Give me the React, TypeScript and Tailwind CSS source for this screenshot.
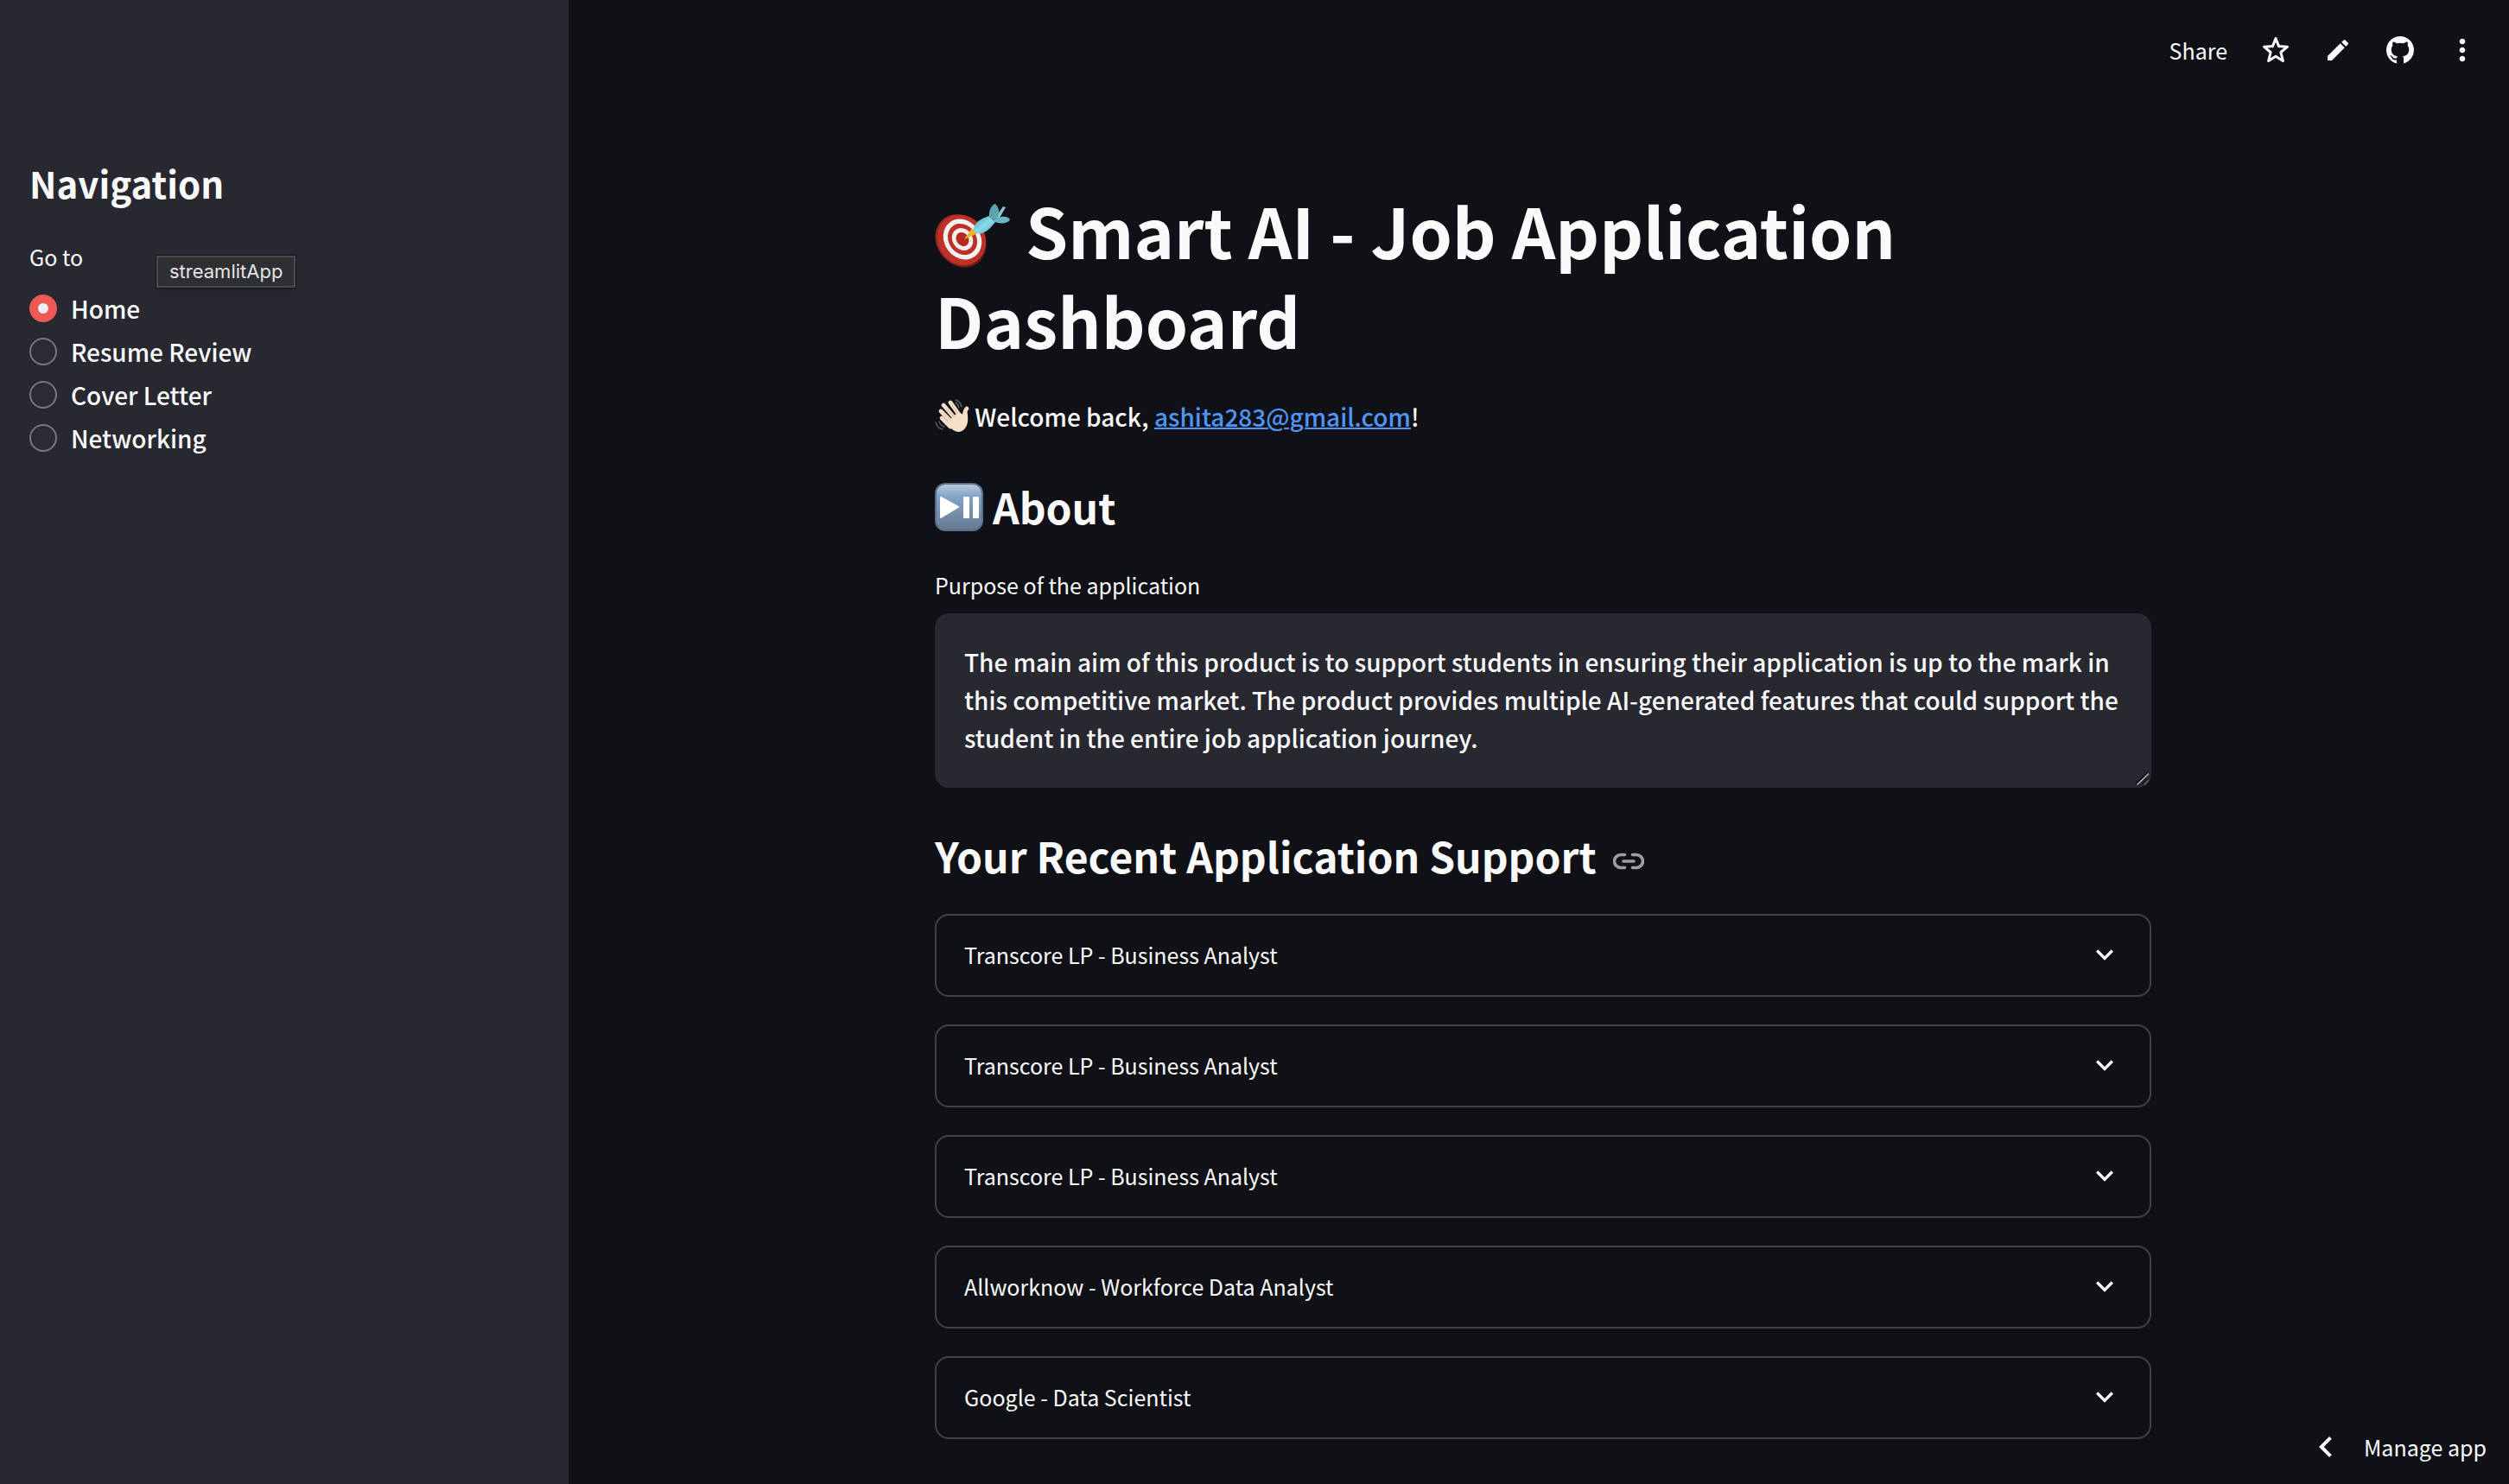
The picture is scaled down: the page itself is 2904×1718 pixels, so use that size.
import { MdChevronLeft, MdEdit, MdExpandMore, MdMoreVert } from "react-icons/md";

const pages = ["Home", "Resume Review", "Cover Letter", "Networking"];

const applications = [
  "Transcore LP - Business Analyst",
  "Transcore LP - Business Analyst",
  "Transcore LP - Business Analyst",
  "Allworknow - Workforce Data Analyst",
  "Google - Data Scientist",
];

const purpose =
  "The main aim of this product is to support students in ensuring their application is up to the mark in this competitive market. The product provides multiple AI-generated features that could support the student in the entire job application journey.";

function TargetIcon() {
  return (
    <svg viewBox="1 0 87 76" className="inline-block h-[76px] w-[87px] align-[-11px]" role="img" aria-label="Direct hit">
      <defs>
        <linearGradient id="dart" x1="0" y1="0" x2="1" y2="1">
          <stop offset="0" stopColor="#4f9fac" />
          <stop offset="0.5" stopColor="#84dbe6" />
          <stop offset="1" stopColor="#5fb4c0" />
        </linearGradient>
      </defs>
      <ellipse cx="32" cy="45" rx="27" ry="31" fill="#6b1a16" transform="rotate(-35 32 45)" />
      <ellipse cx="30" cy="43" rx="27" ry="31" fill="#9c2822" transform="rotate(-35 30 43)" />
      <g transform="rotate(-35 33 42)">
        <ellipse cx="32" cy="42" rx="27" ry="30" fill="#be3028" />
        <ellipse cx="33" cy="42" rx="21" ry="24.5" fill="#f3f1ef" />
        <ellipse cx="33" cy="42" rx="16" ry="19" fill="#bd2f27" />
        <ellipse cx="33" cy="42" rx="11.5" ry="13.5" fill="#f3f1ef" />
        <ellipse cx="33" cy="42" rx="7" ry="8.5" fill="#b52a23" />
      </g>
      <path d="M35 42 44 29 51 35Z" fill="#e3b62f" />
      <path d="M46 31C46 22 55 18 64 15L71 22C64 31 57 37 49 35Z" fill="url(#dart)" />
      <path d="M69 20 80 4 83 5 76 17Z" fill="#86c7d0" />
      <path d="M64 17C63 8 67 2 71 1C76 6 77 13 71 20Z" fill="#5aa5b0" />
      <path d="M68 21C75 15 84 14 88 19C86 24 76 25 68 21Z" fill="#68b6c1" />
    </svg>
  );
}

function WaveIcon() {
  return (
    <svg viewBox="0 0 40 40" className="inline-block h-10 w-10 align-[-8px]" role="img" aria-label="Waving hand">
      <g stroke="#f6dfc9" strokeLinecap="round" fill="none">
        <path d="M8 22 18 32" strokeWidth="4.6" />
        <path d="M7 14 20 27" strokeWidth="4.8" />
        <path d="M10 7 23 22" strokeWidth="4.8" />
        <path d="M18 4 28 18" strokeWidth="4.8" />
        <path d="M37 11C33 15 35 21 33 25" strokeWidth="4.6" />
      </g>
      <path d="M14 27 27 15 33 18 37 12C39 22 39 30 34 35C29 40 22 38 18 33Z" fill="#f6dfc9" />
      <path d="M10 16 19 25M13 11 23 21M20 7 27 17" stroke="#d9b497" strokeWidth="1" fill="none" />
      <g stroke="#5b5c60" strokeWidth="1.4" strokeLinecap="round" fill="none">
        <path d="M1 27C2 31 5 34 9 35M5 26C6 29 8 31 11 32M24 1C28 2 30 5 31 9M24 4C26 5 27 7 28 10" />
      </g>
    </svg>
  );
}

function PlayPauseIcon() {
  return (
    <svg viewBox="0 0 56 56" className="inline-block h-14 w-14 align-[-8px]" role="img" aria-label="Play or pause">
      <defs>
        <linearGradient id="key" x1="0" y1="0" x2="0" y2="1">
          <stop offset="0" stopColor="#bccbdc" />
          <stop offset="0.28" stopColor="#84a2c4" />
          <stop offset="1" stopColor="#65798f" />
        </linearGradient>
      </defs>
      <rect x="1" y="1" width="54" height="54" rx="11" fill="url(#key)" stroke="#56718d" strokeWidth="2" />
      <path d="M7 17 27 28 7 40Z" fill="#fff" stroke="#fff" strokeWidth="2" strokeLinejoin="round" />
      <rect x="33" y="16" width="7" height="25" rx="1" fill="#fff" />
      <rect x="44" y="16" width="7" height="25" rx="1" fill="#fff" />
    </svg>
  );
}

function StarIcon() {
  return (
    <svg viewBox="0 0 32 32" className="size-8" fill="none" stroke="currentColor" strokeWidth="3" strokeLinejoin="round" aria-hidden="true">
      <path d="M16 2.5 19.6 11.6 29.5 12.2 21.9 18.5 24.4 28.5 16 23.2 7.6 28.5 10.1 18.5 2.5 12.2 12.4 11.6Z" />
    </svg>
  );
}

function GithubIcon() {
  return (
    <svg viewBox="0 0 16 16" className="size-8" fill="currentColor" aria-hidden="true">
      <path d="M8 0C3.58 0 0 3.58 0 8c0 3.54 2.29 6.53 5.47 7.59.4.07.55-.17.55-.38 0-.19-.01-.82-.01-1.49-2.01.37-2.53-.49-2.69-.94-.09-.23-.48-.94-.82-1.13-.28-.15-.68-.52-.01-.53.63-.01 1.08.58 1.23.82.72 1.21 1.87.87 2.33.66.07-.52.28-.87.51-1.07-1.78-.2-3.64-.89-3.64-3.95 0-.87.31-1.59.82-2.15-.08-.2-.36-1.02.08-2.12 0 0 .67-.21 2.2.82.64-.18 1.32-.27 2-.27s1.36.09 2 .27c1.53-1.04 2.2-.82 2.2-.82.44 1.1.16 1.92.08 2.12.51.56.82 1.27.82 2.15 0 3.07-1.87 3.75-3.65 3.95.29.25.54.73.54 1.48 0 1.07-.01 1.93-.01 2.2 0 .21.15.46.55.38A8.01 8.01 0 0 0 16 8c0-4.42-3.58-8-8-8Z" />
    </svg>
  );
}

function AnchorIcon() {
  return (
    <svg viewBox="0 0 24 24" className="inline-block size-9 align-[-4px]" fill="none" stroke="currentColor" strokeWidth="2.4" strokeLinecap="round" strokeLinejoin="round" aria-hidden="true">
      <path d="M15 7h3a5 5 0 0 1 0 10h-3M9 17H6A5 5 0 0 1 6 7h3M8 12h8" />
    </svg>
  );
}

function ResizeGrip() {
  return (
    <svg viewBox="0 0 20 20" className="pointer-events-none absolute right-0 bottom-0 size-5" fill="none" strokeLinecap="round" aria-hidden="true">
      <path d="M2.5 15 15.5 3M11 15 15 11" stroke="#0c0d10" strokeWidth="2" />
      <path d="M4 16 16.5 4" stroke="#b9b9bc" strokeWidth="1.6" />
      <path d="M12 16 16.5 11.5" stroke="#6d6e73" strokeWidth="1.6" />
    </svg>
  );
}

function Sidebar() {
  return (
    <aside className="relative w-[658px] shrink-0 bg-[#272830] px-[34px] pt-[186px]">
      <h2 className="text-[42px] leading-[52px] font-bold">Navigation</h2>
      <fieldset className="mt-[41px]">
        <legend className="text-[25px] leading-9">Go to</legend>
        <div className="mt-[17px]">
          {pages.map((page, i) => (
            <label key={page} className="flex h-[50px] items-center gap-4 text-[28px] leading-[44px] font-medium">
              <input
                type="radio"
                name="page"
                defaultChecked={i === 0}
                className="size-8 shrink-0 appearance-none rounded-full border-2 border-[#77787d] bg-[#2a2b34] checked:border-10 checked:border-[#ed5a53] checked:bg-[#f0f0f4]"
              />
              {page}
            </label>
          ))}
        </div>
      </fieldset>
      <div
        role="tooltip"
        className="absolute top-[296px] left-[181px] border-2 border-[#4a4b4d] bg-[#2e2f32] px-[13px] font-['Inter',sans-serif] text-[22px] leading-[33px] text-[#e3e3e4] shadow-lg outline outline-[#17181b]"
      >
        streamlitApp
      </div>
    </aside>
  );
}

function Toolbar() {
  return (
    <header className="flex h-[116px] items-center justify-end pr-[18px]">
      <button className="px-5 text-[25px] leading-9">Share</button>
      <button className="flex w-[72px] justify-center" aria-label="Favorite">
        <StarIcon />
      </button>
      <button className="flex w-[72px] justify-center" aria-label="Edit">
        <MdEdit className="size-8" />
      </button>
      <button className="flex w-[72px] justify-center" aria-label="View source on GitHub">
        <GithubIcon />
      </button>
      <button className="flex w-[72px] justify-center" aria-label="More options">
        <MdMoreVert className="size-10" />
      </button>
    </header>
  );
}

export default function App() {
  return (
    <div className="flex min-h-screen bg-[#101116] font-['Noto_Sans_CJK_SC',sans-serif] text-[#fafafa]">
      <Sidebar />
      <div className="relative flex min-w-0 flex-1 flex-col">
        <Toolbar />
        <main className="ml-[10px] flex justify-center px-8 pt-[98px] pb-12">
          <div className="w-full max-w-[1408px]">
            <h1 className="text-[79px] leading-[104px] font-bold">
              <TargetIcon /> Smart AI - Job Application Dashboard
            </h1>
            <p className="mt-[38px] text-[28px] leading-[44px] font-medium">
              <WaveIcon /> Welcome back,{" "}
              <a href="mailto:ashita283@gmail.com" className="text-[#4f96f8] underline decoration-2">
                ashita283@gmail.com
              </a>
              !
            </p>
            <h2 className="mt-[52px] text-[48px] leading-[60px] font-bold">
              <PlayPauseIcon /> About
            </h2>
            <label htmlFor="purpose" className="mt-[43px] block text-[25px] leading-9">
              Purpose of the application
            </label>
            <div className="relative mt-[15px]">
              <textarea
                id="purpose"
                rows={3}
                defaultValue={purpose}
                className="block w-full resize-none rounded-2xl bg-[#272830] pt-[34px] pr-6 pb-9 pl-[34px] text-[28px] leading-[44px] font-medium outline-none"
              />
              <ResizeGrip />
            </div>
            <h2 className="mt-12 text-[48px] leading-[60px] font-bold">
              Your Recent Application Support{" "}
              <a href="#recent" aria-label="Link to this section" className="ml-2 text-[#9d9ea1]">
                <AnchorIcon />
              </a>
            </h2>
            <div id="recent" className="mt-[38px] flex flex-col gap-8">
              {applications.map((name, i) => (
                <details key={i} className="rounded-2xl border-2 border-[#404145]">
                  <summary className="flex h-[92px] list-none items-center justify-between px-8 pb-0.5 text-[25px] leading-9">
                    {name}
                    <MdExpandMore className="size-10" />
                  </summary>
                </details>
              ))}
            </div>
          </div>
        </main>
        <button className="absolute right-[26px] bottom-[19px] flex h-12 items-center gap-5 text-[25px] leading-9">
          <MdChevronLeft className="size-12" />
          Manage app
        </button>
      </div>
    </div>
  );
}
